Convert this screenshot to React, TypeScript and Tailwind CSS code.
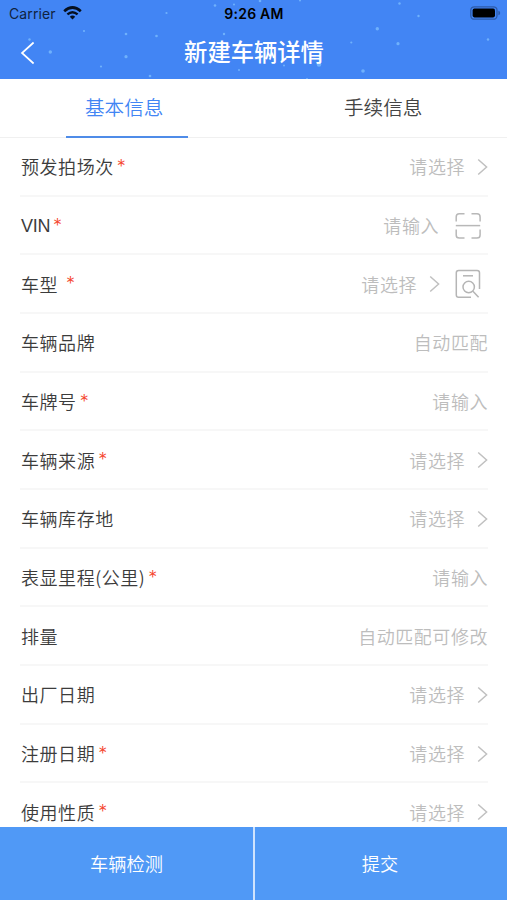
import React from 'react'

type FieldType = {
  label: string
  required?: boolean
  spaced?: boolean
  latin?: boolean
  hint: string
  arrow?: boolean
  icon?: 'scan' | 'search'
}

const fields: FieldType[] = [
  { label: '预发拍场次', required: true, hint: '请选择', arrow: true },
  { label: 'VIN', required: true, latin: true, hint: '请输入', icon: 'scan' },
  { label: '车型', required: true, spaced: true, hint: '请选择', arrow: true, icon: 'search' },
  { label: '车辆品牌', hint: '自动匹配' },
  { label: '车牌号', required: true, hint: '请输入' },
  { label: '车辆来源', required: true, hint: '请选择', arrow: true },
  { label: '车辆库存地', hint: '请选择', arrow: true },
  { label: '表显里程(公里)', required: true, hint: '请输入' },
  { label: '排量', hint: '自动匹配可修改' },
  { label: '出厂日期', hint: '请选择', arrow: true },
  { label: '注册日期', required: true, hint: '请选择', arrow: true },
  { label: '使用性质', required: true, hint: '请选择', arrow: true },
]

// x, y, radius
const stars = [
  [29.5, 39.5, 1.2],
  [50.3, 52, 1.7],
  [84, 31, 1.1],
  [101, 66.5, 1.1],
  [126, 34, 1.3],
  [126, 56.7, 1.6],
  [150, 76, 1.3],
  [156.5, 36, 1.3],
  [166.5, 13, 1.1],
  [215, 5.5, 1.3],
  [224, 34, 1.2],
  [239, 70, 1],
  [234, 4.5, 1],
  [260, 1, 1.3],
  [300, 0.5, 1],
  [284, 65.5, 1],
  [307, 79, 1.1],
  [319, 64.5, 2.2],
  [351.3, 42.5, 1.1],
  [363, 71, 1.8],
  [377.3, 28.8, 1.7],
  [398, 43.7, 1.6],
  [399.5, 3.5, 1.2],
  [418.5, 16, 1.2],
  [488, 39.5, 1.2],
]

const Chevron = () => (
  <svg className="ml-[12px] shrink-0" width="11" height="18" viewBox="0 0 11 18" fill="none">
    <path d="M1.2 1.5L9.6 9L1.2 16.5" stroke="#c0c0c0" strokeWidth="1.5" />
  </svg>
)

const ScanIcon = () => (
  <svg className="mr-[6px] ml-[16px]" width="27" height="28" viewBox="0 0 27 28" fill="none" stroke="#b8b8b8" strokeWidth="1.5">
    <path d="M9.5 1.8H4.3Q1.2 1.8 1.2 4.9V9.5M16.5 1.8H22Q25.1 1.8 25.1 4.9V9.5" />
    <path d="M1.2 17.5V22.9Q1.2 26 4.3 26H9.5M16.5 26H22Q25.1 26 25.1 22.9V17.5" />
    <path d="M0.8 13.6H25.2" />
  </svg>
)

const SearchIcon = () => (
  <svg className="mr-[6px] ml-[15px]" width="27" height="30" viewBox="0 0 27 30" fill="none" stroke="#b5b5b5" strokeWidth="1.5">
    <path d="M16 28.2H3.6Q1.3 28.2 1.3 25.9V3.8Q1.3 1.5 3.6 1.5H22.2Q24.5 1.5 24.5 3.8V20" />
    <path d="M8 6.8H18" />
    <circle cx="13.7" cy="18" r="5.7" />
    <path d="M17.7 22.1L23.6 28.3" />
  </svg>
)

const StatusBar = () => (
  <div className="relative flex h-[27px] items-center justify-between pr-[6px] pl-[9px] font-['Inter'] text-black">
    <div className="flex items-center gap-[7px]">
      <span className="text-[14px] leading-none font-normal tracking-[0.1px] text-[#10233f]">Carrier</span>
      <svg className="-mt-px" width="19" height="14" viewBox="0 0 19 14" fill="none" stroke="#06101f">
        <path d="M1.2 5.2Q9.5 -2.2 17.8 5.2" strokeWidth="2.7" />
        <path d="M4.4 8.4Q9.5 4 14.6 8.4" strokeWidth="2.4" />
        <path d="M6.8 10.7Q9.5 8.3 12.2 10.7L9.5 13.5Z" fill="#06101f" stroke="none" />
      </svg>
    </div>
    <svg className="-mt-px" width="31" height="14" viewBox="0 0 31 14">
      <rect x="0.8" y="0.8" width="26.2" height="12.4" rx="3.5" fill="none" stroke="#2e5ba9" strokeWidth="1.3" />
      <rect x="2.6" y="2.6" width="22.4" height="8.8" rx="1.8" fill="#000" />
      <path d="M28.4 4.8Q30.2 5.3 30.2 7Q30.2 8.7 28.4 9.2Z" fill="#2e5ba9" />
    </svg>
    <span className="absolute inset-x-0 pl-px text-center text-[14px] leading-none font-semibold tracking-[0.25px]">
      9:26 AM
    </span>
  </div>
)

const Header = () => (
  <header className="relative h-[79px] shrink-0 bg-[#4285f4]">
    <svg className="absolute inset-0" width="507" height="79" viewBox="0 0 507 79">
      {stars.map(([x, y, r]) => (
        <circle key={`${x}-${y}`} cx={x} cy={y} r={r} fill="#7fc0ff" opacity="0.75" />
      ))}
    </svg>
    <StatusBar />
    <div className="relative flex h-[52px] items-center pl-[20px]">
      <svg width="15" height="24" viewBox="0 0 15 24" fill="none">
        <path d="M13.6 1.5L2 12L13.6 22.5" stroke="#fff" strokeWidth="1.7" />
      </svg>
      <h1 className="absolute inset-x-0 top-[7px] pl-px text-center text-[23.3px] leading-[34px] font-medium text-white">
        新建车辆详情
      </h1>
    </div>
  </header>
)

const App = () => {
  return (
    <div className="flex h-[900px] w-[507px] flex-col overflow-hidden bg-white font-['Noto_Sans_CJK_SC',sans-serif] font-[350]">
      <Header />

      <nav className="flex h-[59px] shrink-0 justify-between border-b border-[#f0f0f0] px-[66px] text-[19.6px] text-[#444]">
        <div className="relative w-[122px] pl-[19px] leading-[56px] text-[#4285f4]">
          基本信息
          <span className="absolute -bottom-px left-0 h-[2px] w-full bg-[#4f8ce8]" />
        </div>
        <div className="w-[122px] pl-[25px] leading-[56px] whitespace-nowrap">手续信息</div>
      </nav>

      <main className="min-h-0 flex-1 overflow-hidden pr-[19px] pl-[20px] text-[18px] tracking-[0.55px]">
        {fields.map((item) => (
          <div
            key={item.label}
            className="flex h-[58.68px] items-center justify-between border-b-2 border-[#f7f7f7] pt-px"
          >
            <div className="flex items-center pl-px text-[#3c3c3c]">
              <span className={item.latin ? "pt-[2px] font-['Liberation_Sans'] tracking-[-0.3px]" : ''}>
                {item.label}
              </span>
              {item.required && (
                <span
                  className={`font-['Inter'] text-[18px] leading-none text-[#f5452d] ${item.spaced ? 'ml-[8px]' : 'ml-[3px]'}`}
                >
                  *
                </span>
              )}
            </div>
            <div className="flex items-center text-[#bdbdbd]">
              <span>{item.hint}</span>
              {item.arrow && <Chevron />}
              {item.icon === 'scan' && <ScanIcon />}
              {item.icon === 'search' && <SearchIcon />}
            </div>
          </div>
        ))}
      </main>

      <footer className="flex h-[73px] shrink-0 bg-[#5099f6] text-[18.2px] text-white">
        <button className="w-[255px] border-r-2 border-[#cfe3fd]">车辆检测</button>
        <button className="flex-1 pr-[2px]">提交</button>
      </footer>
    </div>
  )
}

export default App
